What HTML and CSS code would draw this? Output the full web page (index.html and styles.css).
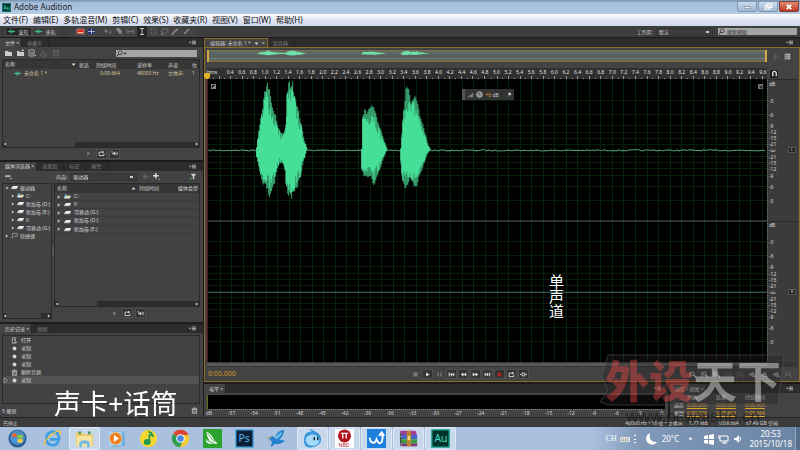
FILE: index.html
```
<!DOCTYPE html>
<html lang="zh-CN">
	<head>
		<meta charset="utf-8" />
		<title>Adobe Audition</title>
		<link rel="stylesheet" href="styles.css">
	</head>
	<body>
		<svg class="defs" width="0" height="0">
			<symbol id="i-play" viewBox="0 0 10 10"><path d="M3 2l5 3-5 3z" fill="currentColor"/></symbol>
			<symbol id="i-loop" viewBox="0 0 10 10"><path d="M3 3H1.5v5h7V5M3 3h4" fill="none" stroke="currentColor" stroke-width="1.3"/><path d="M6 1l3 2-3 2z" fill="currentColor"/></symbol>
			<symbol id="i-sound" viewBox="0 0 10 10"><path d="M0 2h3L1.5 4zM2 4h2l2-2v6L4 6H2z" fill="currentColor"/><path d="M7 3.500q1.500 1.500 0 3M8.500 2.500q2 2.500 0 5" fill="none" stroke="currentColor"/></symbol>
			<symbol id="i-menu" viewBox="0 0 10 10"><path d="M0 4h3L1.500 6z" fill="currentColor"/><path d="M4 3h6M4 5h6M4 7h6" stroke="currentColor"/></symbol>
			<symbol id="i-drive" viewBox="0 0 10 10"><path d="M0 6l3-3h7L8 7H1z" fill="#eee"/><path d="M1 7h7l2-3" fill="none" stroke="#999"/></symbol>
			<symbol id="i-sys" viewBox="0 0 10 10"><path d="M0 6l3-2h7L8 8H1z" fill="#eee"/><path d="M1 2h3v3H1z" fill="#68b8d8"/><path d="M4 4h3v2H4z" fill="#d8c040"/></symbol>
			<symbol id="i-tri" viewBox="0 0 10 10"><path d="M2 1l6 4-6 4z" fill="currentColor"/></symbol>
			<symbol id="i-down" viewBox="0 0 10 10"><path d="M1 3h8L5 8z" fill="currentColor"/></symbol>
			<symbol id="i-up" viewBox="0 0 10 10"><path d="M1 7h8L5 2z" fill="currentColor"/></symbol>
			<symbol id="i-trash" viewBox="0 0 10 10"><path d="M2 3.500h6V9H2zM1 2.500h8M4 1h2M4 5v3M6 5v3" fill="none" stroke="currentColor"/></symbol>
			<symbol id="i-wave" viewBox="0 0 10 10"><path d="M0 5h10M2 4v2M4 2v6M6 3v4M8 4v2" stroke="#3fca8c" stroke-width="1.200"/></symbol>
			<symbol id="i-zoom" viewBox="0 0 10 10"><circle cx="5" cy="4" r="2.500" fill="none" stroke="currentColor" stroke-width="1.200"/><path d="M7 6l3 3" stroke="currentColor" stroke-width="1.600"/><path d="M1 1v8" stroke="currentColor"/></symbol>
			<symbol id="i-zoomh" viewBox="0 0 10 10"><circle cx="5" cy="5" r="2.500" fill="none" stroke="currentColor" stroke-width="1.200"/><path d="M7 7l3 2M0 5h2M4 5h2" stroke="currentColor" stroke-width="1.400"/></symbol>
			<symbol id="i-lens" viewBox="0 0 10 10"><circle cx="6" cy="4" r="2.800" fill="none" stroke="currentColor"/><path d="M4 6L1 9" stroke="currentColor" stroke-width="1.400"/></symbol>
			<symbol id="i-dot" viewBox="0 0 10 10"><circle cx="5" cy="5" r="2.800" fill="currentColor"/></symbol>
		</svg>

		<div class="app">
			<div class="titlebar">
				<svg class="logo" viewBox="0 0 10 10"><path d="M0 0h10v10H0z" fill="#06362f"/><path d="M.5.5h9v9h-9z" fill="none" stroke="#0c7e6a"/><path d="M2 7l1.500-4L5 7M2.500 6h2M6 4.500V7h2V4.500" fill="none" stroke="#36d3b6" stroke-width=".8"/></svg>
				<h1>Adobe Audition</h1>
				<div class="win-btns">
					<button aria-label="最小化"><svg viewBox="0 0 20 11"><path d="M7 5h7v2H7z" fill="#fff" stroke="#667" stroke-width=".6"/></svg></button>
					<button aria-label="还原"><svg viewBox="0 0 20 11"><path d="M9 2h5v4H9zM7 4h5v4H7z" fill="#9ab" stroke="#fff" stroke-width="1.300"/></svg></button>
					<button class="close" aria-label="关闭"><svg viewBox="0 0 20 11"><path d="M7.500 3l5 5M12.500 3l-5 5" stroke="#fff" stroke-width="2"/></svg></button>
				</div>
			</div>
			<nav class="menubar">
				<a href="#">文件(F)</a>
				<a href="#">编辑(E)</a>
				<a href="#">多轨混音(M)</a>
				<a href="#">剪辑(C)</a>
				<a href="#">效果(S)</a>
				<a href="#">收藏夹(R)</a>
				<a href="#">视图(V)</a>
				<a href="#">窗口(W)</a>
				<a href="#">帮助(H)</a>
			</nav>
			<div class="toolbar">
				<button class="mode on"><svg class="ico"><use href="#i-wave"/></svg>波形</button>
				<button class="mode"><svg class="ico"><use href="#i-wave"/></svg>多轨</button>
				<svg class="tools" viewBox="0 0 130 11">
					<path d="M0 11L11 0h119v11z" fill="#424242"/>
					<path d="M10 3h7v5h-7z" fill="#d82a22"/><path d="M11 6h5v1h-5z" fill="#f6cf8c"/><path d="M10 3h7v5h-7z" fill="none" stroke="#bbb" stroke-width=".5"/>
					<path d="M21 3h7v5h-7z" fill="#25337e"/><path d="M21 5.500h7M24.500 3v5" stroke="#ccc" stroke-width=".8"/>
					<path d="M38 3l3 3h-3zM42 7l3-1M43 4v4" stroke="#777" fill="#777" stroke-width=".8"/>
					<path d="M49 3l3-1 3 4-2 2zM54 9h2" fill="#888" stroke="#888" stroke-width=".6"/>
					<path d="M60 3v5M67 3v5M61 5.500h5M62.500 4L61 5.500 62.500 7M64.500 4L66 5.500 64.500 7" fill="none" stroke="#777" stroke-width=".8"/>
					<path d="M70 0h10v11H70z" fill="#262626"/><path d="M73 2.500h4M73 8.500h4M75 2.500v6" stroke="#ccc" stroke-width=".9"/>
					<path d="M84 3h5v5h-5z" fill="none" stroke="#777" stroke-dasharray="1 1"/>
					<path d="M96 7q-3-1-1-3t5-1-1 4-4 0l-1 2" fill="none" stroke="#777" stroke-width=".9"/>
					<path d="M105 9q1-3 6-6M117 8l5-5" fill="none" stroke="#888" stroke-width="1.500"/>
				</svg>
				<div class="space"></div>
				<label class="ws">工作区:
					<select><option>默认</option></select>
				</label>
				<div class="search help"><svg class="ico"><use href="#i-lens"/></svg><input value="搜索帮助" aria-label="搜索帮助"></div>
			</div>

			<div class="workspace">
				<div class="side">
					<!-- 文件 -->
					<section class="panel files">
						<div class="tabs"><a class="tab on" href="#">文件 ×</a><a class="tab" href="#">收藏夹</a><svg class="ico more"><use href="#i-menu"/></svg></div>
						<div class="bar">
							<svg class="file-icons" viewBox="0 0 58 10">
								<path d="M0 3h3l1 1h3v4H0z" fill="#ccc"/>
								<path d="M12 3h2l1 1h4v4h-7zM16 3l2-2 1 2z" fill="#ccc"/>
								<path d="M24 2h5v6h-5zM25 5h3M26 6h2" fill="none" stroke="#aaa"/><path d="M30 7h1v1h-1z" fill="#ccc"/>
								<path d="M36 5v3h5V5M38 6V2" fill="none" stroke="#666"/>
								<path d="M49 4h4v4h-4zM48 3h6" fill="none" stroke="#666"/>
							</svg>
							<div class="space"></div>
							<div class="search"><svg class="ico"><use href="#i-lens"/></svg><svg class="ico caret"><use href="#i-down"/></svg><input aria-label="搜索文件"></div>
						</div>
						<div class="box">
							<table class="list">
								<thead><tr><th class="c-name">名称 <svg class="ico sort"><use href="#i-down"/></svg></th><th class="c-state">状态</th><th class="c-dur">持续时间</th><th class="c-rate">采样率</th><th class="c-ch">声道</th><th>位</th></tr></thead>
								<tbody><tr class="gold"><td class="c-file"><svg class="ico"><use href="#i-wave"/></svg>未命名 1 *</td><td></td><td class="num">0:09.664</td><td>48000 Hz</td><td>立体声</td><td>1</td></tr></tbody>
							</table>
							<div class="scroll"><svg class="ico left"><use href="#i-tri"/></svg><div class="track"><i class="thumb files-thumb"></i></div><svg class="ico"><use href="#i-tri"/></svg></div>
						</div>
						<div class="preview">
							<button class="flat" aria-label="播放"><svg class="ico"><use href="#i-play"/></svg></button>
							<button aria-label="循环"><svg class="ico"><use href="#i-loop"/></svg></button>
							<button aria-label="自动播放"><svg class="ico"><use href="#i-sound"/></svg></button>
						</div>
					</section>

					<!-- 媒体浏览器 -->
					<section class="panel media">
						<div class="tabs"><a class="tab on" href="#">媒体浏览器 ×</a><a class="tab" href="#">效果组</a><a class="tab" href="#">标记</a><a class="tab" href="#">属性</a><svg class="ico more"><use href="#i-menu"/></svg></div>
						<div class="bar">
							<svg class="ico drv" viewBox="0 0 10 10"><path d="M0 3h8v3H0z" fill="#888"/><path d="M0 4.500h8" stroke="#ddd"/><path d="M7 8h3" stroke="#ddd"/></svg>
							<label class="content">内容:
								<select><option>驱动器</option></select>
							</label>
							<svg class="ico dim" viewBox="0 0 10 10"><path d="M9 5H2M5 2L2 5l3 3" fill="none" stroke="currentColor" stroke-width="1.500"/></svg>
							<svg class="ico add" viewBox="0 0 10 10"><path d="M4 0v8M0 4h8" stroke="#ddd" stroke-width="2"/><path d="M8 9h2" stroke="#ddd"/></svg>
							<div class="space"></div>
							<svg class="ico filter" viewBox="0 0 10 10"><path d="M1 1h8L6 5v4H4V5z" fill="#ccc"/><path d="M0 7h2v2H0z" fill="#4c4"/></svg>
						</div>
						<div class="split">
							<div class="box tree">
								<ul>
									<li><svg class="ico tw"><use href="#i-down"/></svg><svg class="ico"><use href="#i-drive"/></svg>驱动器</li>
									<li class="sub"><svg class="ico tw"><use href="#i-tri"/></svg><svg class="ico"><use href="#i-sys"/></svg>C:</li>
									<li class="sub"><svg class="ico tw"><use href="#i-tri"/></svg><svg class="ico"><use href="#i-drive"/></svg>新加卷 (D:)</li>
									<li class="sub"><svg class="ico tw"><use href="#i-tri"/></svg><svg class="ico"><use href="#i-drive"/></svg>新加卷 (E:)</li>
									<li class="sub"><svg class="ico tw"><use href="#i-tri"/></svg><svg class="ico"><use href="#i-drive"/></svg>F:</li>
									<li class="sub"><svg class="ico tw"><use href="#i-tri"/></svg><svg class="ico"><use href="#i-drive"/></svg>可移动 (G:)</li>
									<li><svg class="ico tw"><use href="#i-tri"/></svg><svg class="ico" viewBox="0 0 10 10"><path d="M2 8V2h7v4H4M0 8h3" fill="none" stroke="#aaa"/></svg>快捷键</li>
								</ul>
								<div class="scroll"><svg class="ico left"><use href="#i-tri"/></svg><div class="track"><i class="thumb tree-thumb"></i></div><svg class="ico"><use href="#i-tri"/></svg></div>
							</div>
							<div class="grip"></div>
							<div class="browse">
								<div class="box">
									<table class="list lines">
										<thead><tr><th class="m-name">名称 <svg class="ico sort"><use href="#i-up"/></svg></th><th class="m-dur">持续时间</th><th>媒体类型</th></tr></thead>
										<tbody>
											<tr><td><svg class="ico tw"><use href="#i-tri"/></svg><svg class="ico"><use href="#i-sys"/></svg>C:</td><td></td><td></td></tr>
											<tr><td><svg class="ico tw"><use href="#i-tri"/></svg><svg class="ico"><use href="#i-drive"/></svg>F:</td><td></td><td></td></tr>
											<tr><td><svg class="ico tw"><use href="#i-tri"/></svg><svg class="ico"><use href="#i-drive"/></svg>可移动 (G:)</td><td></td><td></td></tr>
											<tr><td><svg class="ico tw"><use href="#i-tri"/></svg><svg class="ico"><use href="#i-drive"/></svg>新加卷 (D:)</td><td></td><td></td></tr>
											<tr><td><svg class="ico tw"><use href="#i-tri"/></svg><svg class="ico"><use href="#i-drive"/></svg>新加卷 (E:)</td><td></td><td></td></tr>
										</tbody>
									</table>
									<div class="scroll"><svg class="ico left"><use href="#i-tri"/></svg><div class="track"><i class="thumb media-thumb"></i></div><svg class="ico"><use href="#i-tri"/></svg></div>
								</div>
								<div class="preview">
									<button class="flat" aria-label="播放"><svg class="ico"><use href="#i-play"/></svg></button>
									<button aria-label="循环"><svg class="ico"><use href="#i-loop"/></svg></button>
									<button aria-label="自动播放"><svg class="ico"><use href="#i-sound"/></svg></button>
								</div>
							</div>
						</div>
					</section>

					<!-- 历史记录 -->
					<section class="panel history">
						<div class="tabs"><a class="tab on" href="#">历史记录 ×</a><a class="tab" href="#">视频</a><svg class="ico more"><use href="#i-menu"/></svg></div>
						<ul class="box">
							<li><svg class="ico" viewBox="0 0 10 10"><path d="M2 1h4v8H2zM4 4h3M5 8h4" fill="none" stroke="#ccc"/></svg>打开</li>
							<li><svg class="ico"><use href="#i-dot"/></svg>录制</li>
							<li><svg class="ico"><use href="#i-dot"/></svg>录制</li>
							<li><svg class="ico"><use href="#i-dot"/></svg>录制</li>
							<li><svg class="ico"><use href="#i-trash"/></svg>删除音频</li>
							<li class="cur"><svg class="ico mark" viewBox="0 0 10 10"><path d="M2 1h3l4 4-4 4H2z" fill="none" stroke="#ccc"/></svg><svg class="ico"><use href="#i-dot"/></svg>录制</li>
						</ul>
						<div class="undo">5 撤销<svg class="ico"><use href="#i-trash"/></svg></div>
					</section>
				</div>

				<div class="main">
					<!-- 编辑器 -->
					<section class="panel editor">
						<div class="tabs"><a class="tab on" href="#">编辑器: 未命名 1 * <svg class="ico"><use href="#i-down"/></svg> ×</a><a class="tab" href="#">混音器</a><svg class="ico more"><use href="#i-menu"/></svg></div>
						<div class="frame">
							<div class="row over">
								<svg id="overview" class="overview" viewBox="0 0 558 12" preserveAspectRatio="none"></svg>
								<div class="gutter">
									<svg class="ico dim" viewBox="0 0 10 10"><path d="M5 0v10M3 3v4M1 4v2M7 2v6M9 4v2" stroke="currentColor"/></svg>
									<svg class="ico" viewBox="0 0 10 10"><path d="M1 1h8v8H1z" fill="#bbb"/><path d="M1 4h8M1 6.500h8M3.500 1v8" stroke="#555" stroke-width=".8"/></svg>
								</div>
							</div>
							<div class="row">
								<div class="ruler">
									<div id="times" class="times"></div>
									<svg id="ticks" class="ticks" viewBox="0 0 558 3" preserveAspectRatio="none"></svg>
									<i class="playhead"></i>
								</div>
								<div class="gutter">
									<button class="snap" aria-label="对齐"><svg class="ico" viewBox="0 0 10 10"><path d="M2.500 9V5a2.500 3 0 015 0v4" fill="none" stroke="#ddd" stroke-width="2"/></svg></button>
								</div>
							</div>
							<div class="row wave-row">
								<div class="wave">
									<svg id="wave" viewBox="0 0 558 282" preserveAspectRatio="none"></svg>
									<input type="checkbox" class="corner" checked aria-label="左声道">
									<svg class="corner end" viewBox="0 0 6 6"><path d="M0 0h6v6H0z" fill="#777"/><path d="M1.500 1.500l3 3M4.500 2v2.500H2" stroke="#111" fill="none"/></svg>
									<div class="hud">
										<i class="hud-grip"></i>
										<svg class="ico" viewBox="0 0 10 10"><path d="M0 9l9-7v7z" fill="#777"/></svg>
										<svg class="ico" viewBox="0 0 10 10"><circle cx="5" cy="5" r="4" fill="#888" stroke="#ccc"/><path d="M5 5L3 2" stroke="#222"/></svg>
										<span><b>+0</b> dB</span>
										<svg class="ico pin" viewBox="0 0 10 10"><path d="M3 2h4l1 3-4 1zM5 5L2 9" fill="#ccc" stroke="#ccc"/></svg>
									</div>
									<p class="mono">单声道</p>
								</div>
								<div class="gutter levels">
									<div class="db"></div>
									<div class="chan"><button>L</button></div>
									<div class="db"></div>
									<div class="chan"><button>R</button></div>
								</div>
							</div>
							<div class="hscroll"><i></i></div>
							<div class="transport">
								<span class="time">0:00.000</span>
								<div class="keys">
									<button class="flat" aria-label="停止"><svg class="ico" viewBox="0 0 10 10"><path d="M2 2h6v6H2z" fill="currentColor"/></svg></button>
									<button aria-label="播放"><svg class="ico"><use href="#i-play"/></svg></button>
									<button class="flat" aria-label="暂停"><svg class="ico" viewBox="0 0 10 10"><path d="M2 2h2v6H2zM6 2h2v6H6z" fill="currentColor"/></svg></button>
									<button aria-label="上一个"><svg class="ico" viewBox="0 0 10 10"><path d="M1 2h1.500v6H1zM9 2v6L6 5v3L3 5l3-3v3z" fill="currentColor"/></svg></button>
									<button aria-label="快退"><svg class="ico" viewBox="0 0 10 10"><path d="M5 2v6L1 5zM9 2v6L5 5z" fill="currentColor"/></svg></button>
									<button aria-label="快进"><svg class="ico" viewBox="0 0 10 10"><path d="M1 2v6l4-3zM5 2v6l4-3z" fill="currentColor"/></svg></button>
									<button aria-label="下一个"><svg class="ico" viewBox="0 0 10 10"><path d="M7.500 2H9v6H7.500zM1 2v6l3-3v3l3-3-3-3v3z" fill="currentColor"/></svg></button>
									<button class="rec" aria-label="录制"><svg class="ico"><use href="#i-dot"/></svg></button>
									<button aria-label="循环"><svg class="ico"><use href="#i-loop"/></svg></button>
									<button aria-label="跳过"><svg class="ico" viewBox="0 0 10 10"><path d="M0 5h2M8 5h2M3 3v4l4 0V3z" fill="none" stroke="currentColor" stroke-width="1.300"/></svg></button>
								</div>
								<div class="zooms">
									<svg class="ico"><use href="#i-zoom"/></svg>
									<svg class="ico"><use href="#i-zoom"/></svg>
									<svg class="ico"><use href="#i-zoom"/></svg>
									<svg class="ico dim"><use href="#i-zoom"/></svg>
									<svg class="ico dim"><use href="#i-zoom"/></svg>
									<svg class="ico"><use href="#i-zoomh"/></svg>
									<svg class="ico"><use href="#i-zoomh"/></svg>
									<svg class="ico"><use href="#i-zoomh"/></svg>
									<svg class="ico dim"><use href="#i-zoom"/></svg>
								</div>
							</div>
						</div>
					</section>

					<div class="bottom">
						<!-- 电平 -->
						<section class="panel meter">
							<div class="tabs"><a class="tab on" href="#">电平 ×</a><svg class="ico more"><use href="#i-menu"/></svg></div>
							<div class="meter-bar"></div>
							<div id="meterScale" class="meter-scale"></div>
						</section>
						<!-- 选区/视图 -->
						<section class="panel sel">
							<div class="tabs"><a class="tab on" href="#">选区 / 视图 ×</a><svg class="ico more"><use href="#i-menu"/></svg></div>
							<table>
								<thead><tr><th class="s-label"></th><th>开始</th><th>结束</th><th>持续时间</th></tr></thead>
								<tbody>
									<tr><th>选区</th><td>0:00.000</td><td>0:00.000</td><td>0:00.000</td></tr>
									<tr><th>视图</th><td>0:00.000</td><td>0:09.664</td><td>0:09.664</td></tr>
								</tbody>
							</table>
						</section>
					</div>
				</div>
			</div>

			<div class="status">
				<span>已停止</span>
				<div class="space"></div>
				<span>48000 Hz • 16 位 • 立体声</span>
				<span class="s-size">1.77 MB</span>
				<span class="s-len">0:09.664</span>
				<span class="s-free">67.49 GB 空闲</span>
			</div>

			<div class="taskbar">
				<button class="task start" aria-label="开始"><svg viewBox="0 0 22 22"><circle cx="11" cy="11" r="10.500" fill="#2d5f95"/><circle cx="11" cy="10" r="8.500" fill="#4c8cc0"/><path d="M5 6q3-2 5 0v4q-2-2-5 0z" fill="#f0642c"/><path d="M11 6q3 2 6 0v4q-3 2-6 0z" fill="#8ccb3c"/><path d="M5 11q3-2 5 0v5q-2-2-5-1z" fill="#3c9be8"/><path d="M11 11q3 2 6 0v4q-3 2-6 0z" fill="#fbd13d"/></svg></button>
				<div class="tasks">
					<button class="task" aria-label="Internet Explorer"><svg viewBox="0 0 22 22"><path d="M18 14q-2 5-7 5-7-1-7-8t7-8q8 0 7.500 9H8" fill="none" stroke="#3aa0e6" stroke-width="3.200"/><path d="M2 19Q0 15 8 8T20 3q1 1-1 4" fill="none" stroke="#f3c13c" stroke-width="1.500"/></svg></button>
					<button class="task on" aria-label="资源管理器"><svg viewBox="0 0 22 22"><path d="M1 4h7l2 2h11v14H1z" fill="#e9c765"/><path d="M2 8h18v12H2z" fill="#f7e3a0"/><path d="M4 3h3v3H4zM15 3h3v3h-3z" fill="#4c9b5a"/><path d="M5 21v-6q6-4 12 0v6h-3v-4H8v4z" fill="#74bbe4"/></svg></button>
					<button class="task" aria-label="媒体播放器"><svg viewBox="0 0 22 22"><path d="M6 2l14 1 1 16-14 2z" fill="#6fb0dd"/><path d="M2 3h15v16H2z" fill="#a9d3f0"/><circle cx="10" cy="11" r="7" fill="#ee7d1c" stroke="#f7b77c"/><path d="M8 7l6 4-6 4z" fill="#fff"/></svg></button>
					<button class="task" aria-label="QQ音乐"><svg viewBox="0 0 22 22"><circle cx="11" cy="11" r="10" fill="#f7d633"/><path d="M11 3q4 1 5 5-3-2-4-1v7" fill="none" stroke="#1f9b4c" stroke-width="2"/><ellipse cx="9.500" cy="15" rx="4" ry="3.500" fill="#1f9b4c"/></svg></button>
					<button class="task" aria-label="Chrome"><svg viewBox="0 0 22 22"><circle cx="11" cy="11" r="10" fill="#f3cb34"/><path d="M11 11L2.500 5.700A10 10 0 0120.300 7H11z" fill="#db4437"/><path d="M2.500 5.700A10 10 0 0010 21l4-7-3-3z" fill="#2c9f52"/><circle cx="11" cy="11" r="5" fill="#fff"/><circle cx="11" cy="11" r="3.800" fill="#4a86e0"/></svg></button>
					<button class="task" aria-label="CorelDRAW"><svg viewBox="0 0 22 22"><path d="M0 0h22v22H0z" fill="#2ba12e"/><path d="M4 3q6 3 9 10l4 4H7q-4-1-4-5l5 2Q4 9 4 3z" fill="#fff"/><path d="M5 5l8 10M4 13l9 4" stroke="#2ba12e"/></svg></button>
					<button class="task" aria-label="Photoshop"><svg viewBox="0 0 22 22"><path d="M1 1h20v20H1z" fill="#0b1e36" stroke="#48a5dc" stroke-width="1.500"/><text x="4" y="15" font-size="12" fill="#55bdf2">Ps</text></svg></button>
					<button class="task" aria-label="迅雷"><svg viewBox="0 0 22 22"><path d="M1 10l5-2 3 2q3-8 11-9-1 8-6 11l7 2q-6 5-12 3l-4 4q-1-4 1-6z" fill="#2381cf"/><path d="M9 10q5-5 9-7-2 6-7 9z" fill="#73c0ee"/><path d="M1 10l4-1-1 2z" fill="#edb52d"/></svg></button>
				</div>
				<div class="tasks">
					<button class="task on" aria-label="旺旺"><svg viewBox="0 0 22 22"><path d="M6 0q5 0 8 3 7 3 7 9.500T11 21 1 13 10 3Q9 1 6 0z" fill="#3696dc"/><ellipse cx="11" cy="13" rx="8" ry="6.500" fill="#a5dbf8"/><path d="M13 9v4M17 9v4" stroke="#123" stroke-width="1.600"/></svg></button>
					<button class="task on" aria-label="NBD"><svg viewBox="0 0 22 22"><path d="M0 0h22v22H0z" fill="#fff"/><circle cx="11" cy="8" r="7.500" fill="#b0141c"/><path d="M7 5h8M9 5v6M13 5v6" stroke="#fff" stroke-width="1.500" fill="none"/><text x="4" y="21" font-size="6" fill="#b0141c">NBD</text></svg></button>
					<button class="task on" aria-label="同步"><svg viewBox="0 0 22 22"><path d="M0 0h22v22H0z" fill="#1e7fdc"/><path d="M3 10q1 6 4 6t4-4q3 7 6 3 2-4 0-10M14 8l3-4 3 4" fill="none" stroke="#fff" stroke-width="2.200"/></svg></button>
					<button class="task on" aria-label="WinRAR"><svg viewBox="0 0 22 22"><path d="M1 2h18l2 5H3z" fill="#a23d96"/><path d="M3 7h18v5H3z" fill="#3f67c8"/><path d="M1 12h20v5H3z" fill="#3f9c46"/><path d="M3 17h18v3H3z" fill="#8b2e7c"/><path d="M9 2h5v18H9z" fill="#b88330"/><path d="M10 8h3v5h-3z" fill="#f2dc7b"/><path d="M2 4v16M1 7h3M1 11h3M1 15h3" stroke="#333"/></svg></button>
					<button class="task on" aria-label="Audition"><svg viewBox="0 0 22 22"><path d="M1 1h20v20H1z" fill="#03332d" stroke="#14a98e" stroke-width="1.500"/><text x="4" y="15" font-size="12" fill="#3bdcc0">Au</text></svg></button>
				</div>
				<div class="tray">
					<span class="ime">CH</span>
					<svg class="kbd" viewBox="0 0 18 10"><path d="M0 3h10v5H0z" fill="#ddd"/><path d="M1 5h8M1 6.500h8" stroke="#777" stroke-dasharray="1 1" stroke-width=".7"/><path d="M14 1h2v1h-2zM14 5h2v1h-2zM14 8h2v1h-2z" fill="#fff"/></svg>
					<svg class="moon" viewBox="0 0 12 12"><path d="M5 0A6 6 0 1012 9Q3 9 5 0z" fill="#fff"/></svg>
					<span class="temp">20°C</span>
					<svg class="ico up"><use href="#i-up"/></svg>
					<svg class="net" viewBox="0 0 38 12"><path d="M0 3l4-1v4H0zM5 2l5-1v5H5zM0 7h4v4l-4-1zM5 7h5v5l-5-1z" fill="#fff"/><path d="M16 3h8v5h-8zM18 10h5M21 8v2M15 2v4" fill="none" stroke="#fff"/><path d="M30 5h2l3-3v8l-3-3h-2z" fill="#fff"/><path d="M36 4q1 2 0 4" fill="none" stroke="#fff"/></svg>
					<div class="clock"><span>20:53</span><span>2015/10/18</span></div>
					<button class="desk" aria-label="显示桌面"></button>
				</div>
			</div>
		</div>

		<p class="caption">声卡+话筒</p>
		<div class="mark-logo">
			<svg class="mark-bg" viewBox="0 0 186 54" preserveAspectRatio="none"><path d="M8 1h176l-6 50H8L0 48l8-12-6-14z"/></svg>
			<div class="mark-name"><b>外设</b><span>天下</span></div>
			<div class="mark-url">www.pcwaishe.cn</div>
		</div>
		<script src="script.js"></script>
	</body>
</html>
```
FILE: styles.css
```
*{
	margin: 0;
	padding: 0;
	box-sizing: border-box;
}
body{
	height: 100vh;
	overflow: hidden;
	font-family: "Noto Sans", "Noto Sans CJK SC", sans-serif;
	font-size: 5px;
	line-height: 8px;
	color: #d4d4d4;
	background-color: #1c1c1c;
}
a{
	text-decoration: none;
	color: inherit;
}
ul{
	list-style: none;
}
button, input, select{
	font: inherit;
	color: inherit;
	border: 0;
	background: none;
	border-radius: 0;
}
button{
	display: flex;
	align-items: center;
	justify-content: center;
}
/*公用*/
.defs{
	position: absolute;
}
.app{
	height: 100%;
	display: flex;
	flex-direction: column;
}
.ico{
	width: 7px;
	height: 7px;
	flex: none;
}
.space{
	flex: 1;
}
.dim{
	color: #666;
}
.panel{
	display: flex;
	flex-direction: column;
	min-width: 0;
	min-height: 0;
	background-color: #434343;
}
.tabs{
	display: flex;
	align-items: center;
	flex: none;
	height: 9px;
	background-color: #2c2c2c;
	white-space: nowrap;
}
.tab{
	display: flex;
	align-items: center;
	height: 9px;
	padding: 0 6px 0 5px;
	color: #808080;
	border-right: 1px solid #242424;
}
.tab.on{
	padding-right: 2px;
	background-color: #434343;
	color: #d0d0d0;
}
.tab .ico{
	width: 5px;
	margin: 0 3px;
}
.tabs .more{
	margin-left: auto;
	margin-right: 7px;
}
.bar{
	display: flex;
	align-items: center;
	flex: none;
	height: 12px;
	padding: 0 3px;
}
.box{
	display: flex;
	flex-direction: column;
	flex: 1;
	min-height: 0;
	overflow: hidden;
	border: 1px solid #2a2a2a;
	background-color: #424242;
}
.search{
	display: flex;
	align-items: center;
	width: 81px;
	height: 7px;
	background-color: #a4a4a4;
	color: #222;
}
.search input{
	flex: 1;
	min-width: 0;
	height: 7px;
}
.search .caret{
	width: 4px;
}
select{
	appearance: none;
	height: 8px;
	padding: 0 0 0 2px;
	line-height: 6px;
	border: 1px solid #333;
	background: linear-gradient(90deg, #ccc, #ccc) right 3px center / 3px 2px no-repeat #3b3b3b;
}
.list{
	width: 100%;
	table-layout: fixed;
	border-collapse: collapse;
	white-space: nowrap;
}
.list th{
	height: 8px;
	font-weight: normal;
	text-align: left;
	background-color: #363636;
	overflow: hidden;
}
.list th, .list td{
	padding: 0 0 0 2px;
	line-height: 8px;
}
.list td{
	height: 8px;
}
.list .ico{
	vertical-align: middle;
	margin-right: 3px;
}
.list .ico.sort{
	width: 5px;
	float: right;
	margin: 1px;
}
.list .tw, .tree .tw{
	width: 4px;
	height: 4px;
}
.lines td{
	border-bottom: 1px solid #3b3b3b;
	line-height: 7px;
}
.gold{
	color: #d8c69a;
}
.scroll{
	display: flex;
	align-items: center;
	flex: none;
	height: 5px;
	margin-top: auto;
	background-color: #2d2d2d;
}
.scroll .ico{
	width: 4px;
	height: 4px;
}
.left{
	transform: rotate(180deg);
}
.track{
	flex: 1;
	height: 5px;
}
.thumb{
	display: block;
	height: 5px;
	background-color: #424242;
}
.files-thumb{
	width: 36%;
}
.media-thumb{
	width: 28%;
}
.tree-thumb{
	width: 85%;
}
.preview{
	display: flex;
	flex: none;
	justify-content: center;
	gap: 2px;
	height: 12px;
	padding-top: 1px;
}
.preview button, .keys button{
	width: 11px;
	height: 10px;
	background-color: #333;
	border: 1px solid #505050;
	color: #ddd;
}
.preview .flat, .keys .flat{
	background: none;
	border-color: #434343;
	color: #777;
}
/*标题栏*/
.titlebar{
	display: flex;
	align-items: center;
	flex: none;
	height: 14px;
	padding: 0 1px 0 2px;
	background: linear-gradient(#7790af, #a3bddb 20%, #b4cbe4);
	color: #222;
}
.logo{
	width: 9px;
	height: 9px;
	margin-right: 3px;
}
.titlebar h1{
	flex: 1;
	font-size: 8px;
	font-weight: normal;
}
.win-btns{
	display: flex;
	align-self: flex-start;
	padding-top: 1px;
	gap: 1px;
}
.win-btns button{
	width: 20px;
	height: 11px;
	border: 1px solid #8497b0;
	border-radius: 0 0 2px 2px;
	background: linear-gradient(#cddcec, #9db5d2);
}
.win-btns .close{
	background: linear-gradient(#e08a74, #bf3822);
	border-color: #7d3a30;
}
.menubar{
	display: flex;
	align-items: center;
	flex: none;
	gap: 5px;
	height: 12px;
	padding: 0 3px;
	font-size: 8px;
	color: #111;
	background: linear-gradient(#fff, #dfe4f3 50%, #cfd7ea);
}
.toolbar{
	display: flex;
	align-items: center;
	flex: none;
	height: 11px;
	padding: 0 3px 0 5px;
	background-color: #3d3d3d;
}
.mode{
	gap: 3px;
	width: 27px;
	height: 9px;
	border: 1px solid #4a4a4a;
}
.mode.on{
	background-color: #292929;
}
.tools{
	width: 130px;
	height: 11px;
	margin-left: 8px;
}
.ws{
	display: flex;
	gap: 3px;
	margin-right: 5px;
}
.ws select{
	width: 57px;
}
.toolbar .help{
	width: 79px;
}
.help .ico{
	margin-right: 2px;
}
/*左侧*/
.workspace{
	display: grid;
	grid-template-columns: 203px 1fr;
	gap: 1px;
	flex: 1;
	min-height: 0;
	padding-top: 1px;
}
.side{
	display: grid;
	grid-template-rows: 122fr 161fr 93fr;
	gap: 2px;
	min-height: 0;
}
.side .panel{
	padding: 0 3px 0 2px;
}
.side .tabs{
	margin: 0 -3px 0 -2px;
}
.file-icons{
	width: 58px;
	height: 10px;
}
.c-name{
	width: 74px;
}
.c-state{
	width: 17px;
}
.c-dur{
	width: 41px;
}
.c-rate{
	width: 31px;
}
.c-ch{
	width: 24px;
}
.list .c-file{
	padding-left: 11px;
}
.list .num{
	padding-left: 6px;
}
.drv{
	margin-right: 44px;
}
.content{
	display: flex;
	gap: 3px;
	margin-right: 5px;
}
.content select{
	width: 67px;
}
.bar .add{
	margin-left: 4px;
}
.split{
	display: flex;
	flex: 1;
	min-height: 0;
	padding-bottom: 3px;
}
.tree{
	flex: none;
	width: 50px;
	white-space: nowrap;
}
.tree li{
	display: flex;
	align-items: center;
	gap: 2px;
	padding-left: 2px;
}
.tree .sub{
	padding-left: 8px;
}
.grip{
	width: 2px;
	height: 10px;
	margin: auto 0;
	background-color: #555;
}
.browse{
	display: flex;
	flex-direction: column;
	flex: 1;
	min-width: 0;
}
.m-name{
	width: 82px;
}
.m-dur{
	width: 39px;
}
.history .box{
	margin-top: 2px;
}
.history li{
	display: flex;
	align-items: center;
	gap: 3px;
	padding-left: 8px;
}
.history .cur{
	padding-left: 0;
	background-color: #535353;
}
.history .mark{
	width: 5px;
}
.undo{
	display: flex;
	align-items: center;
	justify-content: space-between;
	flex: none;
	height: 13px;
	padding-right: 2px;
}
/*编辑器*/
.main{
	display: flex;
	flex-direction: column;
	gap: 2px;
	min-width: 0;
	min-height: 0;
}
.editor{
	flex: 1;
}
.editor .tab.on{
	border: 1px solid #8c6d2a;
	border-bottom: 0;
}
.frame{
	display: flex;
	flex-direction: column;
	flex: 1;
	min-height: 0;
	padding: 2px 1px 0 2px;
	border: 1px solid #8c6d2a;
}
.row{
	display: flex;
}
.gutter{
	display: flex;
	align-items: center;
	flex: none;
	width: 31px;
}
.over{
	margin-bottom: 6px;
}
.over .gutter{
	gap: 5px;
	padding-left: 5px;
}
.overview{
	flex: 1;
	min-width: 0;
	height: 12px;
	border: solid #d5a73c;
	border-width: 0 2px;
	background: linear-gradient(#77704e, #596969 25%, #586058 50%, #606666 85%, #8c6d2a);
}
.ruler{
	position: relative;
	flex: 1;
	min-width: 0;
	height: 11px;
	background-color: #303030;
	color: #e0e0e0;
}
.times, .meter-scale{
	display: flex;
	justify-content: space-between;
}
.times{
	height: 8px;
	padding-right: 4px;
}
.times span, .meter-scale span{
	display: flex;
	justify-content: center;
	width: 0;
	white-space: nowrap;
}
.times span:first-child{
	justify-content: flex-start;
}
.ticks{
	display: block;
	width: 100%;
	height: 3px;
}
.playhead{
	position: absolute;
	left: -3px;
	bottom: 0;
	width: 6px;
	height: 6px;
	border-radius: 1px 1px 3px 3px;
	background-color: #e6b422;
}
.snap{
	width: 8px;
	height: 8px;
	margin-left: 3px;
	background-color: #1c1c1c;
}
.wave-row{
	flex: 1;
	min-height: 0;
}
.wave{
	position: relative;
	flex: 1;
	min-width: 0;
	background-color: #000;
	border-left: 1px solid #5a1414;
}
.wave > svg:first-child{
	display: block;
	width: 100%;
	height: 100%;
}
.corner{
	position: absolute;
	top: 5px;
	left: 3px;
	width: 5px;
	height: 5px;
	appearance: none;
	background: linear-gradient(135deg, #222 50%, #999 50%);
	border: 1px solid #888;
}
.corner.end{
	left: auto;
	right: 4px;
	border: 0;
}
.hud{
	position: absolute;
	top: 10px;
	left: 45.5%;
	display: flex;
	align-items: center;
	gap: 2px;
	width: 52px;
	height: 11px;
	background-color: #333;
	color: #ccc;
}
.hud-grip{
	width: 3px;
	height: 11px;
	background-color: #555;
}
.hud b{
	font-weight: normal;
	color: #e0a52c;
}
.hud .pin{
	width: 5px;
	margin: 0 2px 0 auto;
}
.mono{
	position: absolute;
	top: 195px;
	left: 61%;
	width: 16px;
	font-size: 15px;
	line-height: 15px;
	color: #fff;
}
.levels{
	display: grid;
	grid-template-columns: 19px 1fr;
	grid-template-rows: minmax(0, 1fr) minmax(0, 1fr);
	align-items: stretch;
	background-color: #3b3b3b;
	color: #ddd;
}
/*刻度间距与波形网格一致*/
.db{
	display: flex;
	flex-direction: column;
	min-height: 0;
	border-top: 1px solid #2a2a2a;
	border-left: 1px dotted #777;
}
.db span{
	display: flex;
	align-items: flex-end;
	flex: 6 1 0;
	min-height: 0;
	padding-left: 1px;
	line-height: 6px;
}
.db span:nth-child(1), .db span:nth-child(5), .db span:nth-child(9), .db span:nth-child(12){
	flex-grow: 7;
}
.db span:nth-child(2), .db span:nth-child(15){
	flex-grow: 17;
}
.db span:nth-child(3), .db span:nth-child(14){
	flex-grow: 14;
}
.db span:nth-child(4), .db span:nth-child(13){
	flex-grow: 11;
}
.chan{
	display: flex;
	align-items: center;
	border-top: 1px solid #2a2a2a;
}
.chan button{
	width: 8px;
	height: 6px;
	margin-left: 2px;
	background-color: #222;
	border: 1px solid #555;
	font-size: 4px;
	line-height: 4px;
}
.hscroll{
	flex: none;
	height: 5px;
	padding: 1px 31px 1px 0;
	background-color: #353535;
}
.hscroll i{
	display: block;
	height: 3px;
	background-color: #595959;
}
.transport{
	display: grid;
	grid-template-columns: 202px 1fr auto;
	align-items: center;
	flex: none;
	height: 14px;
	padding: 0 6px 0 1px;
}
.time{
	font-size: 7px;
	color: #d9952d;
}
.keys{
	display: flex;
	gap: 1px;
}
.keys .rec{
	color: #b3201c;
}
.zooms{
	display: flex;
	gap: 5px;
}
.bottom{
	display: grid;
	grid-template-columns: 1fr 130px;
	gap: 2px;
	flex: none;
	height: 33px;
}
.meter-bar{
	height: 15px;
	margin: 2px 3px 0 3px;
	background-color: #000;
	border-left: 1px solid #6e6a1c;
}
.meter-scale{
	height: 8px;
	margin: 0 6px 0 5px;
	line-height: 7px;
	border-top: 1px dotted #888;
}
.sel table{
	width: 100px;
	margin-left: 4px;
	table-layout: fixed;
	border-collapse: collapse;
	white-space: nowrap;
}
.sel th{
	font-weight: normal;
	text-align: left;
}
.sel .s-label{
	width: 13px;
}
.sel td{
	color: #e0a52c;
	text-decoration: underline;
}
.status{
	display: flex;
	align-items: center;
	flex: none;
	height: 10px;
	padding: 0 22px 0 3px;
	background-color: #3b3b3b;
	border-top: 1px solid #262626;
	white-space: nowrap;
}
.s-size{
	margin-left: 6px;
}
.s-len{
	margin-left: 11px;
}
.s-free{
	margin-left: 7px;
}
/*任务栏*/
.taskbar{
	display: flex;
	flex: none;
	height: 23px;
	background: linear-gradient(90deg, #a9c1de 74%, #8199b8 80%, #6c84a3);
}
.tasks{
	display: flex;
	gap: 1px;
	margin-right: 5px;
}
.task{
	width: 31px;
	height: 23px;
	border: 1px solid transparent;
	border-radius: 2px;
}
.task.start{
	margin: 0 4px 0 2px;
}
.task.on{
	border-color: #dfe9f5;
	background-color: #c8d8eb;
}
.task svg{
	width: 19px;
	height: 19px;
}
.tray{
	display: flex;
	align-items: center;
	margin-left: auto;
	font-size: 8px;
	color: #fff;
}
.ime{
	font-family: "Liberation Serif", serif;
	margin-right: 3px;
}
.kbd{
	width: 18px;
	height: 10px;
	margin-right: 7px;
}
.moon{
	width: 12px;
	height: 12px;
	margin-right: 5px;
}
.temp{
	margin-right: 9px;
}
.tray .up{
	width: 5px;
	margin-right: 11px;
}
.net{
	width: 38px;
	height: 12px;
	margin-right: 7px;
}
.clock{
	display: flex;
	flex-direction: column;
	align-items: center;
	line-height: 10px;
	margin-right: 3px;
}
.desk{
	width: 5px;
	height: 23px;
	background-color: #566f8e;
	border-left: 1px solid #93a8c2;
}
/*浮层文字*/
.caption{
	position: fixed;
	left: 54px;
	bottom: 30px;
	font-size: 27px;
	line-height: 32px;
	color: #fff;
}
.mark-logo{
	position: fixed;
	right: 14px;
	bottom: 24px;
	width: 186px;
	pointer-events: none;
	opacity: .6;
}
.mark-bg{
	position: absolute;
	width: 186px;
	height: 54px;
	fill: #222;
	fill-opacity: .6;
	stroke: #555;
}
.mark-name{
	position: relative;
	display: flex;
	justify-content: center;
	font-size: 44px;
	line-height: 54px;
	font-weight: bold;
}
.mark-name b{
	color: #b13b3b;
}
.mark-name span{
	color: #bbb;
}
.mark-url{
	position: relative;
	text-align: center;
	font-family: "Liberation Sans", sans-serif;
	font-size: 17px;
	line-height: 18px;
	color: #141414;
}
```
FILE: script.js
```
function Editor(){
	var W = 558,
		H = 282,
		//x, 上峰值, 下峰值
		bursts = [
			[[48,3,2],[50,22,13],[54,43,30],[56,60,35],[58,70,37],[60,68,42],[62,55,48],[64,44,42],[67,36,34],[69,26,22],[72,19,14],[75,18,14],[77,26,20],[78,57,34],[80,70,45],[84,70,49],[87,55,44],[90,40,37],[93,25,27],[96,10,12],[99,0,0]],
			[[153,2,1],[154,38,22],[156,44,27],[158,40,28],[161,46,29],[163,51,29],[166,42,37],[169,30,28],[172,21,20],[176,8,7],[179,0,0]],
			[[192,2,2],[194,33,27],[195,46,35],[197,63,39],[199,68,38],[202,50,29],[205,57,35],[209,49,38],[211,35,27],[215,23,18],[219,7,5],[222,0,0]]
		],
		seed = 7;
	function byId(id){
		return document.getElementById(id);
	}
	function rnd(){
		seed = (seed * 16807) % 2147483647;
		return seed / 2147483647;
	}
	function value(points, x, n){
		for(var i = 1; i < points.length; i++){
			if(x <= points[i][0]){
				var a = points[i-1], b = points[i];
				return a[n] + (b[n] - a[n]) * (x - a[0]) / (b[0] - a[0]);
			}
		}
		return 0;
	}
	//波形轮廓
	function shape(points, mid, scale, low){
		var top = "", bottom = "", x, k;
		for(x = points[0][0]; x <= points[points.length-1][0]; x++){
			k = scale * (low + (1 - low) * rnd());
			top += "L" + x + " " + (mid - value(points, x, 1) * k).toFixed(1) + "H" + (x + 1);
			bottom = "H" + x + "L" + x + " " + (mid + value(points, x, 2) * k).toFixed(1) + bottom;
		}
		return "M" + points[0][0] + " " + mid + top + bottom + "Z";
	}
	function path(d, attrs){
		return '<path d="' + d + '" ' + attrs + '/>';
	}
	function drawWave(){
		var grid = "", minor = "", noise = "M0 71", html, i, c,
			db = [21, 35, 46, 53, 59, 65, 77, 83, 89, 96, 107, 121];
		for(i = 1; i < 49; i++){
			grid += "M" + Math.round(i * 11.54) + " 0V" + H;
		}
		for(c = 0; c < 2; c++){
			for(i = 0; i < db.length; i++){
				minor += "M0 " + (db[i] + c * 141) + "H" + W;
			}
		}
		for(i = 0; i < W; i += 2){
			noise += "L" + i + " " + (70.5 + rnd() * 1.2).toFixed(1);
		}
		html = path(grid, 'stroke="#06210a" shape-rendering="crispEdges"');
		html += path(minor, 'stroke="#051d09" shape-rendering="crispEdges"');
		html += path("M0 141.5H" + W, 'stroke="#5e5e5e"');
		html += path("M0 212.5H" + W, 'stroke="#47715e"');
		html += path(noise, 'stroke="#4c9f78" fill="none"');
		bursts.forEach(function(b){
			html += path(shape(b, 71, 1, .88), 'fill="#349a6a"');
			html += path(shape(b, 71, .92, .6), 'fill="#46df98"');
		});
		byId("wave").innerHTML = html;
	}
	function drawOverview(){
		var html = path("M0 8.500H" + W, 'stroke="#7d9a94" stroke-width=".5"');
		bursts.forEach(function(b){
			html += path(shape(b, 3.5, .045, .6), 'fill="#6fe0ab"');
		});
		byId("overview").innerHTML = html;
	}
	function drawRuler(){
		var html = "", ticks = "", i;
		for(i = 0; i < 49; i++){
			html += "<span>" + (i === 0 ? "hms" : i === 1 ? "" : (i / 5).toFixed(1)) + "</span>";
		}
		for(i = 0; i < 97; i++){
			ticks += "M" + Math.round(i * 5.77) + " " + (i % 2 ? 2 : 0) + "V3";
		}
		byId("times").innerHTML = html;
		byId("ticks").innerHTML = path(ticks, 'stroke="#999" shape-rendering="crispEdges"');
	}
	function drawLevels(){
		var half = [-3, -6, -9, -12, -15, -21],
			//末尾空格占住 -3 以下的区间
			all = ["dB"].concat(half, "-∞", half.slice().reverse(), ""),
			html = "", i;
		all.forEach(function(v){
			html += "<span>" + v + "</span>";
		});
		document.querySelectorAll(".db").forEach(function(el){
			el.innerHTML = html;
		});
		html = "<span>dB</span>";
		for(i = -57; i <= 0; i += 3){
			html += "<span>" + i + "</span>";
		}
		byId("meterScale").innerHTML = html;
	}
	drawWave();
	drawOverview();
	drawRuler();
	drawLevels();
}
Editor();
```
